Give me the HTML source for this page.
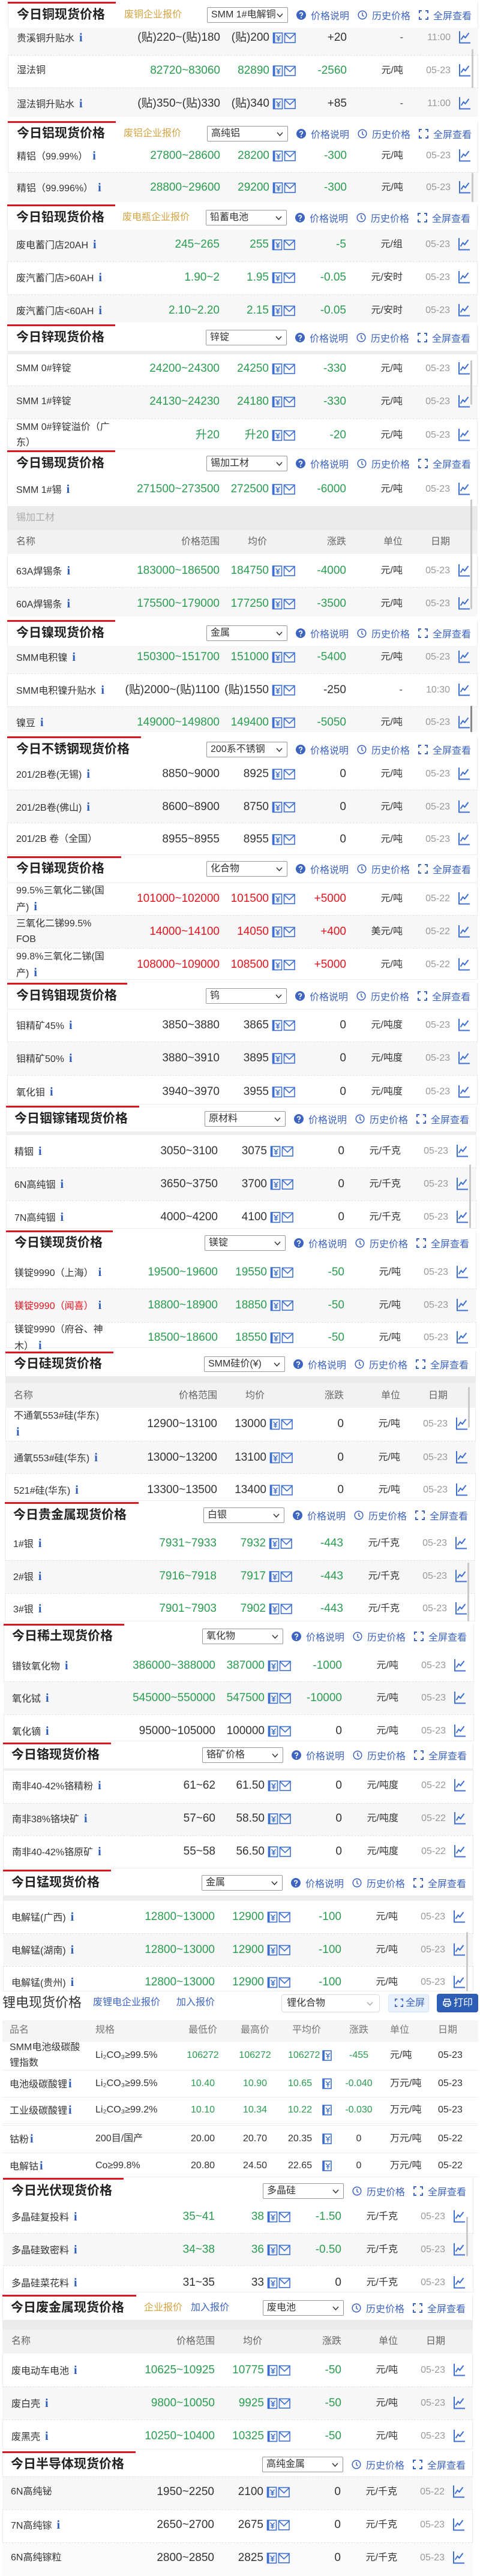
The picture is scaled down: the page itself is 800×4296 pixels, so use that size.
<!DOCTYPE html>
<html><head><meta charset="utf-8">
<style>
*{margin:0;padding:0;box-sizing:border-box}
html,body{width:800px;height:4296px;background:#fff;overflow:hidden}
body{position:relative;font-family:"Liberation Sans","Noto Sans CJK SC",sans-serif;color:#333}
.bar{position:absolute;height:3px;background:#e0141e;z-index:3}
.card{position:absolute;width:784px;border:1px solid #ececec;border-top:none}
.bg{position:absolute;width:784px;background:#f7f7f7}
.sp{position:absolute;width:784px;height:0;border-top:1px dashed #e2e2e2}
.t{position:absolute;height:30px;line-height:30px;font-size:21px;font-weight:bold;color:#222;font-family:"Liberation Sans","Noto Sans CJK SC",sans-serif;white-space:nowrap}
.v{position:absolute;height:24px;line-height:24px;font-size:16px;color:#d4a341;white-space:nowrap}
.lk{position:absolute;height:24px;line-height:24px;font-size:16px;color:#3d64c0;white-space:nowrap}
.sel{position:absolute;width:135px;height:26px;border:1px solid #999;border-radius:2px;font-size:16px;line-height:24px;padding-left:6px;color:#333;white-space:nowrap;overflow:hidden;background:#fff}
.sel svg{position:absolute;right:7px;top:9px;width:11px;height:7px}
.tools{position:absolute;height:24px;display:flex;align-items:center;font-size:16px;color:#3d64c0;white-space:nowrap}
.tools svg{width:16px;height:16px;margin-right:8px;flex:none}
.tools span{margin-right:14px}
.r{position:absolute;width:780px;height:30px}
.r>*{position:absolute;top:0;line-height:30px;white-space:nowrap}
.n{left:15px;font-size:16px;color:#333}
.n2{top:-11px !important;line-height:26px !important}
.p{right:426px;font-size:19px}
.a{right:344px;font-size:19px}
.c{right:215px;font-size:19px}
.u{right:121px;font-size:16px;color:#333}
.d{right:42px;font-size:16px;color:#999}
.ic{left:441px;top:5px !important;width:40px;height:20px}
.cg{left:751px;top:3px !important;width:20px;height:22px}
.G .p,.G .a,.G .c{color:#2a9d50}
.R .p,.R .a,.R .c{color:#e4141c}
.hd>*{font-size:16px !important;color:#666 !important}
.hd .a{right:347px}
i{font-style:normal;font-family:"Liberation Serif",serif;font-weight:bold;color:#2e5cb8;font-size:20px;margin-left:8px}
.sb{position:absolute;width:3px;background:#c9c9c9;border-radius:2px}
.lr{position:absolute;left:4px;width:793px;height:30px}
.lr>*{position:absolute;top:0;line-height:30px;white-space:nowrap;font-size:16px}
.lr .ln{left:12px}.lr .ls{left:155px}
.lr .l1{left:294px;width:80px;text-align:center}
.lr .l2{left:381px;width:80px;text-align:center}
.lr .l3{left:476px}
.lr .ly{left:533px;top:6px !important;width:16px;height:18px}
.lr .l4{left:554px;width:80px;text-align:center}
.lr .l5{left:646px}.lr .l6{left:726px}
.lg .l1,.lg .l2,.lg .l3,.lg .l4{color:#2a9d50}
.ll{position:absolute;left:4px;width:793px;border-top:1px solid #eee}
</style></head><body>
<svg width="0" height="0" style="position:absolute">
<symbol id="ym" viewBox="0 0 40 20">
<rect x="1.5" y="2" width="15" height="16.5" fill="none" stroke="#3d6fd0" stroke-width="1.6"/>
<rect x="1.5" y="2" width="3" height="16.5" fill="#3d6fd0"/>
<polyline points="6.5,6 10,10 13.5,6" fill="none" stroke="#3d6fd0" stroke-width="1.4"/>
<line x1="10" y1="10" x2="10" y2="16" stroke="#3d6fd0" stroke-width="1.4"/>
<line x1="7" y1="11" x2="13" y2="11" stroke="#3d6fd0" stroke-width="1.2"/>
<line x1="7" y1="13.5" x2="13" y2="13.5" stroke="#3d6fd0" stroke-width="1.2"/>
<rect x="20.5" y="2.5" width="17.5" height="15.5" fill="none" stroke="#3d6fd0" stroke-width="1.6"/>
<polyline points="20.5,3 29.2,11.5 38,3" fill="none" stroke="#3d6fd0" stroke-width="1.6"/>
</symbol>
<symbol id="yb" viewBox="0 0 16 18">
<rect x="1" y="1" width="14" height="16" fill="none" stroke="#3d6fd0" stroke-width="1.6"/>
<rect x="1" y="1" width="3" height="16" fill="#3d6fd0"/>
<polyline points="6,5 9.5,9 13,5" fill="none" stroke="#3d6fd0" stroke-width="1.4"/>
<line x1="9.5" y1="9" x2="9.5" y2="15" stroke="#3d6fd0" stroke-width="1.4"/>
<line x1="6.5" y1="10.5" x2="12.5" y2="10.5" stroke="#3d6fd0" stroke-width="1.2"/>
</symbol>
<symbol id="ch" viewBox="0 0 20 22">
<polyline points="2,1 2,20.5 20,20.5" fill="none" stroke="#3d6fd0" stroke-width="2"/>
<polyline points="4.5,15 8.5,9 11.5,12 17.5,4" fill="none" stroke="#3d6fd0" stroke-width="2"/>
</symbol>
<symbol id="q" viewBox="0 0 16 16"><circle cx="8" cy="8" r="8" fill="#3d64c0"/><path d="M5.6,6.2 C5.6,3.6 10.4,3.6 10.4,6.2 C10.4,8 8,8 8,10" fill="none" stroke="#fff" stroke-width="1.8"/><circle cx="8" cy="12.5" r="1.1" fill="#fff"/></symbol>
<symbol id="ck" viewBox="0 0 16 16"><circle cx="8" cy="8" r="6.8" fill="none" stroke="#3d64c0" stroke-width="1.5"/><polyline points="8,4 8,8.5 10.5,10.5" fill="none" stroke="#3d64c0" stroke-width="1.5"/></symbol>
<symbol id="fs" viewBox="0 0 16 16"><path d="M1,5 V1 H5 M11,1 H15 V5 M15,11 V15 H11 M5,15 H1 V11" fill="none" stroke="#3d64c0" stroke-width="2"/></symbol>
<symbol id="dn" viewBox="0 0 11 7"><polyline points="1,1 5.5,6 10,1" fill="none" stroke="#333" stroke-width="1.5"/></symbol>
</svg>

<!-- S1 copper -->
<div class="card" style="top:3px;left:13px;height:192px"></div>
<div class="bg" style="top:46px;left:13px;height:46px"></div>
<div class="bg" style="top:146px;left:13px;height:49px"></div>
<div class="sp" style="top:92px;left:13px"></div><div class="sp" style="top:146px;left:13px"></div>
<div class="bar" style="top:3px;left:13px;width:180px"></div>
<div class="t" style="top:10px;left:28px">今日铜现货价格</div>
<div class="v" style="top:13px;left:207px">废铜企业报价</div>
<div class="sel" style="top:12px;left:345px">SMM 1#电解铜<svg><use href="#dn"/></svg></div>
<div class="tools" style="top:13px;left:494px"><svg><use href="#q"/></svg><span>价格说明</span><svg><use href="#ck"/></svg><span>历史价格</span><svg><use href="#fs"/></svg>全屏查看</div>
<div class="r" style="top:48px;left:13px"><span class="n">贵溪铜升贴水<i>i</i></span><span class="p">(贴)220~(贴)180</span><span class="a">(贴)200</span><svg class="ic"><use href="#ym"/></svg><span class="c">+20</span><span class="u">-</span><span class="d">11:00</span><svg class="cg"><use href="#ch"/></svg></div>
<div class="r G" style="top:103px;left:13px"><span class="n">湿法铜</span><span class="p">82720~83060</span><span class="a">82890</span><svg class="ic"><use href="#ym"/></svg><span class="c">-2560</span><span class="u">元/吨</span><span class="d">05-23</span><svg class="cg"><use href="#ch"/></svg></div>
<div class="r" style="top:158px;left:13px"><span class="n">湿法铜升贴水<i>i</i></span><span class="p">(贴)350~(贴)330</span><span class="a">(贴)340</span><svg class="ic"><use href="#ym"/></svg><span class="c">+85</span><span class="u">-</span><span class="d">11:00</span><svg class="cg"><use href="#ch"/></svg></div>
<div class="sb" style="top:82px;left:786px;height:65px"></div>

<!-- S2 aluminum -->
<div class="card" style="top:202px;left:13px;height:135px"></div>
<div class="bg" style="top:287px;left:13px;height:50px"></div>
<div class="sp" style="top:287px;left:13px"></div>
<div class="bar" style="top:202px;left:13px;width:180px"></div>
<div class="t" style="top:208px;left:28px">今日铝现货价格</div>
<div class="v" style="top:211px;left:206px">废铝企业报价</div>
<div class="sel" style="top:210px;left:345px">高纯铝<svg><use href="#dn"/></svg></div>
<div class="tools" style="top:211px;left:494px"><svg><use href="#q"/></svg><span>价格说明</span><svg><use href="#ck"/></svg><span>历史价格</span><svg><use href="#fs"/></svg>全屏查看</div>
<div class="r G" style="top:245px;left:13px"><span class="n">精铝（99.99%）<i>i</i></span><span class="p">27800~28600</span><span class="a">28200</span><svg class="ic"><use href="#ym"/></svg><span class="c">-300</span><span class="u">元/吨</span><span class="d">05-23</span><svg class="cg"><use href="#ch"/></svg></div>
<div class="r G" style="top:298px;left:13px"><span class="n">精铝（99.996%）<i>i</i></span><span class="p">28800~29600</span><span class="a">29200</span><svg class="ic"><use href="#ym"/></svg><span class="c">-300</span><span class="u">元/吨</span><span class="d">05-23</span><svg class="cg"><use href="#ch"/></svg></div>
<div class="sb" style="top:288px;left:786px;height:49px"></div>

<!-- S3 lead -->
<div class="card" style="top:341px;left:12px;height:197px"></div>
<div class="bg" style="top:383px;left:12px;height:53px"></div>
<div class="bg" style="top:491px;left:12px;height:47px"></div>
<div class="sp" style="top:436px;left:12px"></div><div class="sp" style="top:491px;left:12px"></div>
<div class="bar" style="top:341px;left:12px;width:180px"></div>
<div class="t" style="top:348px;left:27px">今日铅现货价格</div>
<div class="v" style="top:351px;left:204px">废电瓶企业报价</div>
<div class="sel" style="top:350px;left:343px">铅蓄电池<svg><use href="#dn"/></svg></div>
<div class="tools" style="top:351px;left:492px"><svg><use href="#q"/></svg><span>价格说明</span><svg><use href="#ck"/></svg><span>历史价格</span><svg><use href="#fs"/></svg>全屏查看</div>
<div class="r G" style="top:393px;left:12px"><span class="n">废电蓄门店20AH<i>i</i></span><span class="p">245~265</span><span class="a">255</span><svg class="ic"><use href="#ym"/></svg><span class="c">-5</span><span class="u">元/组</span><span class="d">05-23</span><svg class="cg"><use href="#ch"/></svg></div>
<div class="r G" style="top:448px;left:12px"><span class="n">废汽蓄门店&gt;60AH<i>i</i></span><span class="p">1.90~2</span><span class="a">1.95</span><svg class="ic"><use href="#ym"/></svg><span class="c">-0.05</span><span class="u">元/安时</span><span class="d">05-23</span><svg class="cg"><use href="#ch"/></svg></div>
<div class="r G" style="top:503px;left:12px"><span class="n">废汽蓄门店&lt;60AH<i>i</i></span><span class="p">2.10~2.20</span><span class="a">2.15</span><svg class="ic"><use href="#ym"/></svg><span class="c">-0.05</span><span class="u">元/安时</span><span class="d">05-23</span><svg class="cg"><use href="#ch"/></svg></div>

<!-- S4 zinc -->
<div class="card" style="top:541px;left:12px;height:208px"></div>
<div class="bg" style="top:585px;left:12px;height:6px;background:#eee"></div>
<div class="bg" style="top:643px;left:12px;height:55px"></div>
<div class="sp" style="top:643px;left:12px"></div><div class="sp" style="top:698px;left:12px"></div>
<div class="bar" style="top:541px;left:12px;width:180px"></div>
<div class="t" style="top:548px;left:27px">今日锌现货价格</div>
<div class="sel" style="top:550px;left:343px">锌锭<svg><use href="#dn"/></svg></div>
<div class="tools" style="top:551px;left:492px"><svg><use href="#q"/></svg><span>价格说明</span><svg><use href="#ck"/></svg><span>历史价格</span><svg><use href="#fs"/></svg>全屏查看</div>
<div class="r G" style="top:600px;left:12px"><span class="n">SMM 0#锌锭</span><span class="p">24200~24300</span><span class="a">24250</span><svg class="ic"><use href="#ym"/></svg><span class="c">-330</span><span class="u">元/吨</span><span class="d">05-23</span><svg class="cg"><use href="#ch"/></svg></div>
<div class="r G" style="top:655px;left:12px"><span class="n">SMM 1#锌锭</span><span class="p">24130~24230</span><span class="a">24180</span><svg class="ic"><use href="#ym"/></svg><span class="c">-330</span><span class="u">元/吨</span><span class="d">05-23</span><svg class="cg"><use href="#ch"/></svg></div>
<div class="r G" style="top:711px;left:12px"><span class="n n2">SMM 0#锌锭溢价（广<br>东）</span><span class="p">升20</span><span class="a">升20</span><svg class="ic"><use href="#ym"/></svg><span class="c">-20</span><span class="u">元/吨</span><span class="d">05-23</span><svg class="cg"><use href="#ch"/></svg></div>
<div class="sb" style="top:601px;left:784px;height:74px"></div>

<!-- S5 tin -->
<div class="card" style="top:751px;left:12px;height:277px"></div>
<div class="bg" style="top:844px;left:12px;height:40px;background:#ebebeb"></div>
<div class="bg" style="top:884px;left:12px;height:40px;background:#f2f2f2"></div>
<div class="bg" style="top:979px;left:12px;height:49px"></div>
<div class="sp" style="top:979px;left:12px"></div>
<div class="bar" style="top:751px;left:12px;width:180px"></div>
<div class="t" style="top:758px;left:27px">今日锡现货价格</div>
<div class="sel" style="top:760px;left:344px">锡加工材<svg><use href="#dn"/></svg></div>
<div class="tools" style="top:761px;left:493px"><svg><use href="#q"/></svg><span>价格说明</span><svg><use href="#ck"/></svg><span>历史价格</span><svg><use href="#fs"/></svg>全屏查看</div>
<div class="r G" style="top:801px;left:12px"><span class="n">SMM 1#锡<i>i</i></span><span class="p">271500~273500</span><span class="a">272500</span><svg class="ic"><use href="#ym"/></svg><span class="c">-6000</span><span class="u">元/吨</span><span class="d">05-23</span><svg class="cg"><use href="#ch"/></svg></div>
<div class="lk" style="top:852px;left:27px;color:#aaa">锡加工材</div>
<div class="r hd" style="top:889px;left:12px"><span class="n">名称</span><span class="p">价格范围</span><span class="a">均价</span><span class="c">涨跌</span><span class="u">单位</span><span class="d">日期</span></div>
<div class="r G" style="top:937px;left:12px"><span class="n">63A焊锡条<i>i</i></span><span class="p">183000~186500</span><span class="a">184750</span><svg class="ic"><use href="#ym"/></svg><span class="c">-4000</span><span class="u">元/吨</span><span class="d">05-23</span><svg class="cg"><use href="#ch"/></svg></div>
<div class="r G" style="top:992px;left:12px"><span class="n">60A焊锡条<i>i</i></span><span class="p">175500~179000</span><span class="a">177250</span><svg class="ic"><use href="#ym"/></svg><span class="c">-3500</span><span class="u">元/吨</span><span class="d">05-23</span><svg class="cg"><use href="#ch"/></svg></div>
<div class="sb" style="top:833px;left:784px;height:183px"></div>

<!-- S6 nickel -->
<div class="card" style="top:1034px;left:12px;height:187px"></div>
<div class="bg" style="top:1077px;left:12px;height:46px"></div>
<div class="bg" style="top:1178px;left:12px;height:43px"></div>
<div class="sp" style="top:1123px;left:12px"></div><div class="sp" style="top:1178px;left:12px"></div>
<div class="bar" style="top:1034px;left:12px;width:180px"></div>
<div class="t" style="top:1041px;left:27px">今日镍现货价格</div>
<div class="sel" style="top:1043px;left:344px">金属<svg><use href="#dn"/></svg></div>
<div class="tools" style="top:1044px;left:493px"><svg><use href="#q"/></svg><span>价格说明</span><svg><use href="#ck"/></svg><span>历史价格</span><svg><use href="#fs"/></svg>全屏查看</div>
<div class="r G" style="top:1081px;left:12px"><span class="n">SMM电积镍<i>i</i></span><span class="p">150300~151700</span><span class="a">151000</span><svg class="ic"><use href="#ym"/></svg><span class="c">-5400</span><span class="u">元/吨</span><span class="d">05-23</span><svg class="cg"><use href="#ch"/></svg></div>
<div class="r" style="top:1136px;left:12px"><span class="n">SMM电积镍升贴水<i>i</i></span><span class="p">(贴)2000~(贴)1100</span><span class="a">(贴)1550</span><svg class="ic"><use href="#ym"/></svg><span class="c">-250</span><span class="u">-</span><span class="d">10:30</span><svg class="cg"><use href="#ch"/></svg></div>
<div class="r G" style="top:1190px;left:12px"><span class="n">镍豆<i>i</i></span><span class="p">149000~149800</span><span class="a">149400</span><svg class="ic"><use href="#ym"/></svg><span class="c">-5050</span><span class="u">元/吨</span><span class="d">05-23</span><svg class="cg"><use href="#ch"/></svg></div>
<div class="sb" style="top:1177px;left:784px;height:44px;background:#888"></div>

<!-- S7 stainless -->
<div class="card" style="top:1228px;left:12px;height:198px"></div>
<div class="bg" style="top:1317px;left:12px;height:55px"></div>
<div class="sp" style="top:1317px;left:12px"></div><div class="sp" style="top:1372px;left:12px"></div>
<div class="bar" style="top:1228px;left:12px;width:223px"></div>
<div class="t" style="top:1235px;left:27px">今日不锈钢现货价格</div>
<div class="sel" style="top:1237px;left:344px">200系不锈钢<svg><use href="#dn"/></svg></div>
<div class="tools" style="top:1238px;left:493px"><svg><use href="#q"/></svg><span>价格说明</span><svg><use href="#ck"/></svg><span>历史价格</span><svg><use href="#fs"/></svg>全屏查看</div>
<div class="r" style="top:1276px;left:12px"><span class="n">201/2B卷(无锡)<i>i</i></span><span class="p">8850~9000</span><span class="a">8925</span><svg class="ic"><use href="#ym"/></svg><span class="c">0</span><span class="u">元/吨</span><span class="d">05-23</span><svg class="cg"><use href="#ch"/></svg></div>
<div class="r" style="top:1331px;left:12px"><span class="n">201/2B卷(佛山)<i>i</i></span><span class="p">8600~8900</span><span class="a">8750</span><svg class="ic"><use href="#ym"/></svg><span class="c">0</span><span class="u">元/吨</span><span class="d">05-23</span><svg class="cg"><use href="#ch"/></svg></div>
<div class="r" style="top:1385px;left:12px"><span class="n">201/2B 卷（全国）</span><span class="p">8955~8955</span><span class="a">8955</span><svg class="ic"><use href="#ym"/></svg><span class="c">0</span><span class="u">元/吨</span><span class="d">05-23</span><svg class="cg"><use href="#ch"/></svg></div>

<!-- S8 antimony -->
<div class="card" style="top:1428px;left:12px;height:206px"></div>
<div class="sp" style="top:1471px;left:12px;border-top:2px solid #f2f2f2"></div>
<div class="bg" style="top:1526px;left:12px;height:55px"></div>
<div class="sp" style="top:1526px;left:12px"></div><div class="sp" style="top:1581px;left:12px"></div>
<div class="bar" style="top:1428px;left:12px;width:190px"></div>
<div class="t" style="top:1434px;left:27px">今日锑现货价格</div>
<div class="sel" style="top:1436px;left:344px">化合物<svg><use href="#dn"/></svg></div>
<div class="tools" style="top:1437px;left:493px"><svg><use href="#q"/></svg><span>价格说明</span><svg><use href="#ck"/></svg><span>历史价格</span><svg><use href="#fs"/></svg>全屏查看</div>
<div class="r R" style="top:1484px;left:12px"><span class="n n2">99.5%三氧化二锑(国<br>产)<i>i</i></span><span class="p">101000~102000</span><span class="a">101500</span><svg class="ic"><use href="#ym"/></svg><span class="c">+5000</span><span class="u">元/吨</span><span class="d">05-22</span><svg class="cg"><use href="#ch"/></svg></div>
<div class="r R" style="top:1539px;left:12px"><span class="n n2">三氧化二锑99.5%<br>FOB</span><span class="p">14000~14100</span><span class="a">14050</span><svg class="ic"><use href="#ym"/></svg><span class="c">+400</span><span class="u">美元/吨</span><span class="d">05-22</span><svg class="cg"><use href="#ch"/></svg></div>
<div class="r R" style="top:1594px;left:12px"><span class="n n2">99.8%三氧化二锑(国<br>产)<i>i</i></span><span class="p">108000~109000</span><span class="a">108500</span><svg class="ic"><use href="#ym"/></svg><span class="c">+5000</span><span class="u">元/吨</span><span class="d">05-22</span><svg class="cg"><use href="#ch"/></svg></div>

<!-- S9 W Mo -->
<div class="card" style="top:1639px;left:12px;height:203px"></div>
<div class="sp" style="top:1682px;left:12px;border-top:2px solid #f2f2f2"></div>
<div class="bg" style="top:1737px;left:12px;height:56px"></div>
<div class="sp" style="top:1737px;left:12px"></div><div class="sp" style="top:1793px;left:12px"></div>
<div class="bar" style="top:1639px;left:12px;width:200px"></div>
<div class="t" style="top:1646px;left:27px">今日钨钼现货价格</div>
<div class="sel" style="top:1648px;left:343px">钨<svg><use href="#dn"/></svg></div>
<div class="tools" style="top:1649px;left:492px"><svg><use href="#q"/></svg><span>价格说明</span><svg><use href="#ck"/></svg><span>历史价格</span><svg><use href="#fs"/></svg>全屏查看</div>
<div class="r" style="top:1695px;left:12px"><span class="n">钼精矿45%<i>i</i></span><span class="p">3850~3880</span><span class="a">3865</span><svg class="ic"><use href="#ym"/></svg><span class="c">0</span><span class="u">元/吨度</span><span class="d">05-23</span><svg class="cg"><use href="#ch"/></svg></div>
<div class="r" style="top:1750px;left:12px"><span class="n">钼精矿50%<i>i</i></span><span class="p">3880~3910</span><span class="a">3895</span><svg class="ic"><use href="#ym"/></svg><span class="c">0</span><span class="u">元/吨度</span><span class="d">05-23</span><svg class="cg"><use href="#ch"/></svg></div>
<div class="r" style="top:1806px;left:12px"><span class="n">氧化钼<i>i</i></span><span class="p">3940~3970</span><span class="a">3955</span><svg class="ic"><use href="#ym"/></svg><span class="c">0</span><span class="u">元/吨度</span><span class="d">05-23</span><svg class="cg"><use href="#ch"/></svg></div>

<!-- S10 In Ga Ge -->
<div class="card" style="top:1844px;left:10px;height:205px"></div>
<div class="bg" style="top:1887px;left:10px;height:6px;background:#eee"></div>
<div class="bg" style="top:1947px;left:10px;height:55px"></div>
<div class="sp" style="top:1947px;left:10px"></div><div class="sp" style="top:2002px;left:10px"></div>
<div class="bar" style="top:1844px;left:10px;width:222px"></div>
<div class="t" style="top:1851px;left:24px">今日铟镓锗现货价格</div>
<div class="sel" style="top:1853px;left:341px">原材料<svg><use href="#dn"/></svg></div>
<div class="tools" style="top:1854px;left:490px"><svg><use href="#q"/></svg><span>价格说明</span><svg><use href="#ck"/></svg><span>历史价格</span><svg><use href="#fs"/></svg>全屏查看</div>
<div class="r" style="top:1905px;left:9px"><span class="n">精铟<i>i</i></span><span class="p">3050~3100</span><span class="a">3075</span><svg class="ic"><use href="#ym"/></svg><span class="c">0</span><span class="u">元/千克</span><span class="d">05-23</span><svg class="cg"><use href="#ch"/></svg></div>
<div class="r" style="top:1960px;left:9px"><span class="n">6N高纯铟<i>i</i></span><span class="p">3650~3750</span><span class="a">3700</span><svg class="ic"><use href="#ym"/></svg><span class="c">0</span><span class="u">元/千克</span><span class="d">05-23</span><svg class="cg"><use href="#ch"/></svg></div>
<div class="r" style="top:2015px;left:9px"><span class="n">7N高纯铟<i>i</i></span><span class="p">4000~4200</span><span class="a">4100</span><svg class="ic"><use href="#ym"/></svg><span class="c">0</span><span class="u">元/千克</span><span class="d">05-23</span><svg class="cg"><use href="#ch"/></svg></div>
<div class="sb" style="top:1942px;left:782px;height:106px"></div>

<!-- S11 Mg -->
<div class="card" style="top:2052px;left:10px;height:196px"></div>
<div class="bg" style="top:2149px;left:10px;height:56px"></div>
<div class="sp" style="top:2149px;left:10px"></div><div class="sp" style="top:2205px;left:10px"></div>
<div class="bar" style="top:2052px;left:10px;width:178px"></div>
<div class="t" style="top:2058px;left:24px">今日镁现货价格</div>
<div class="sel" style="top:2060px;left:341px">镁锭<svg><use href="#dn"/></svg></div>
<div class="tools" style="top:2061px;left:490px"><svg><use href="#q"/></svg><span>价格说明</span><svg><use href="#ck"/></svg><span>历史价格</span><svg><use href="#fs"/></svg>全屏查看</div>
<div class="r G" style="top:2107px;left:9px"><span class="n">镁锭9990（上海）<i>i</i></span><span class="p">19500~19600</span><span class="a">19550</span><svg class="ic"><use href="#ym"/></svg><span class="c">-50</span><span class="u">元/吨</span><span class="d">05-23</span><svg class="cg"><use href="#ch"/></svg></div>
<div class="r G" style="top:2162px;left:9px"><span class="n" style="color:#e4141c">镁锭9990（闻喜）<i>i</i></span><span class="p">18800~18900</span><span class="a">18850</span><svg class="ic"><use href="#ym"/></svg><span class="c">-50</span><span class="u">元/吨</span><span class="d">05-23</span><svg class="cg"><use href="#ch"/></svg></div>
<div class="r G" style="top:2216px;left:9px"><span class="n n2">镁锭9990（府谷、神<br>木）<i>i</i></span><span class="p">18500~18600</span><span class="a">18550</span><svg class="ic"><use href="#ym"/></svg><span class="c">-50</span><span class="u">元/吨</span><span class="d">05-23</span><svg class="cg"><use href="#ch"/></svg></div>

<!-- S12 Si -->
<div class="card" style="top:2254px;left:9px;height:249px"></div>
<div class="bg" style="top:2295px;left:9px;height:12px;background:#ebebeb"></div>
<div class="bg" style="top:2307px;left:9px;height:41px;background:#f2f2f2"></div>
<div class="bg" style="top:2403px;left:9px;height:54px"></div>
<div class="sp" style="top:2403px;left:9px"></div><div class="sp" style="top:2457px;left:9px"></div>
<div class="bar" style="top:2254px;left:9px;width:180px"></div>
<div class="t" style="top:2260px;left:23px">今日硅现货价格</div>
<div class="sel" style="top:2262px;left:340px">SMM硅价(¥)<svg><use href="#dn"/></svg></div>
<div class="tools" style="top:2263px;left:489px"><svg><use href="#q"/></svg><span>价格说明</span><svg><use href="#ck"/></svg><span>历史价格</span><svg><use href="#fs"/></svg>全屏查看</div>
<div class="r hd" style="top:2313px;left:8px"><span class="n">名称</span><span class="p">价格范围</span><span class="a">均价</span><span class="c">涨跌</span><span class="u">单位</span><span class="d">日期</span></div>
<div class="r" style="top:2360px;left:8px"><span class="n n2">不通氧553#硅(华东)<br><i style="margin-left:4px">i</i></span><span class="p">12900~13100</span><span class="a">13000</span><svg class="ic"><use href="#ym"/></svg><span class="c">0</span><span class="u">元/吨</span><span class="d">05-23</span><svg class="cg"><use href="#ch"/></svg></div>
<div class="r" style="top:2416px;left:8px"><span class="n">通氧553#硅(华东)<i>i</i></span><span class="p">13000~13200</span><span class="a">13100</span><svg class="ic"><use href="#ym"/></svg><span class="c">0</span><span class="u">元/吨</span><span class="d">05-23</span><svg class="cg"><use href="#ch"/></svg></div>
<div class="r" style="top:2470px;left:8px"><span class="n">521#硅(华东)<i>i</i></span><span class="p">13300~13500</span><span class="a">13400</span><svg class="ic"><use href="#ym"/></svg><span class="c">0</span><span class="u">元/吨</span><span class="d">05-23</span><svg class="cg"><use href="#ch"/></svg></div>
<div class="sb" style="top:2313px;left:780px;height:68px"></div>

<!-- S13 precious -->
<div class="card" style="top:2505px;left:8px;height:199px"></div>
<div class="bg" style="top:2602px;left:8px;height:55px"></div>
<div class="sp" style="top:2602px;left:8px"></div><div class="sp" style="top:2657px;left:8px"></div>
<div class="bar" style="top:2505px;left:8px;width:223px"></div>
<div class="t" style="top:2512px;left:22px">今日贵金属现货价格</div>
<div class="sel" style="top:2514px;left:339px">白银<svg><use href="#dn"/></svg></div>
<div class="tools" style="top:2515px;left:488px"><svg><use href="#q"/></svg><span>价格说明</span><svg><use href="#ck"/></svg><span>历史价格</span><svg><use href="#fs"/></svg>全屏查看</div>
<div class="r G" style="top:2559px;left:7px"><span class="n">1#银<i>i</i></span><span class="p">7931~7933</span><span class="a">7932</span><svg class="ic"><use href="#ym"/></svg><span class="c">-443</span><span class="u">元/千克</span><span class="d">05-23</span><svg class="cg"><use href="#ch"/></svg></div>
<div class="r G" style="top:2614px;left:7px"><span class="n">2#银<i>i</i></span><span class="p">7916~7918</span><span class="a">7917</span><svg class="ic"><use href="#ym"/></svg><span class="c">-443</span><span class="u">元/千克</span><span class="d">05-23</span><svg class="cg"><use href="#ch"/></svg></div>
<div class="r G" style="top:2668px;left:7px"><span class="n">3#银<i>i</i></span><span class="p">7901~7903</span><span class="a">7902</span><svg class="ic"><use href="#ym"/></svg><span class="c">-443</span><span class="u">元/千克</span><span class="d">05-23</span><svg class="cg"><use href="#ch"/></svg></div>
<div class="sb" style="top:2606px;left:779px;height:98px"></div>

<!-- S14 rare earth -->
<div class="card" style="top:2708px;left:6px;height:196px"></div>
<div class="bg" style="top:2804px;left:6px;height:55px"></div>
<div class="sp" style="top:2804px;left:6px"></div><div class="sp" style="top:2859px;left:6px"></div>
<div class="bar" style="top:2708px;left:6px;width:201px"></div>
<div class="t" style="top:2714px;left:20px">今日稀土现货价格</div>
<div class="sel" style="top:2716px;left:337px">氧化物<svg><use href="#dn"/></svg></div>
<div class="tools" style="top:2717px;left:486px"><svg><use href="#q"/></svg><span>价格说明</span><svg><use href="#ck"/></svg><span>历史价格</span><svg><use href="#fs"/></svg>全屏查看</div>
<div class="r G" style="top:2763px;left:5px"><span class="n">镨钕氧化物<i>i</i></span><span class="p">386000~388000</span><span class="a">387000</span><svg class="ic"><use href="#ym"/></svg><span class="c">-1000</span><span class="u">元/吨</span><span class="d">05-23</span><svg class="cg"><use href="#ch"/></svg></div>
<div class="r G" style="top:2817px;left:5px"><span class="n">氧化铽<i>i</i></span><span class="p">545000~550000</span><span class="a">547500</span><svg class="ic"><use href="#ym"/></svg><span class="c">-10000</span><span class="u">元/吨</span><span class="d">05-23</span><svg class="cg"><use href="#ch"/></svg></div>
<div class="r" style="top:2872px;left:5px"><span class="n">氧化镝<i>i</i></span><span class="p">95000~105000</span><span class="a">100000</span><svg class="ic"><use href="#ym"/></svg><span class="c">0</span><span class="u">元/吨</span><span class="d">05-23</span><svg class="cg"><use href="#ch"/></svg></div>

<!-- S15 chrome -->
<div class="card" style="top:2906px;left:5px;height:210px"></div>
<div class="bg" style="top:2949px;left:5px;height:4px;background:#eee"></div>
<div class="bg" style="top:3007px;left:5px;height:54px"></div>
<div class="sp" style="top:3007px;left:5px"></div><div class="sp" style="top:3061px;left:5px"></div>
<div class="bar" style="top:2906px;left:5px;width:180px"></div>
<div class="t" style="top:2912px;left:19px">今日铬现货价格</div>
<div class="sel" style="top:2914px;left:337px">铬矿价格<svg><use href="#dn"/></svg></div>
<div class="tools" style="top:2915px;left:486px"><svg><use href="#q"/></svg><span>价格说明</span><svg><use href="#ck"/></svg><span>历史价格</span><svg><use href="#fs"/></svg>全屏查看</div>
<div class="r" style="top:2963px;left:5px"><span class="n">南非40-42%铬精粉<i>i</i></span><span class="p">61~62</span><span class="a">61.50</span><svg class="ic"><use href="#ym"/></svg><span class="c">0</span><span class="u">元/吨度</span><span class="d">05-22</span><svg class="cg"><use href="#ch"/></svg></div>
<div class="r" style="top:3018px;left:5px"><span class="n">南非38%铬块矿<i>i</i></span><span class="p">57~60</span><span class="a">58.50</span><svg class="ic"><use href="#ym"/></svg><span class="c">0</span><span class="u">元/吨度</span><span class="d">05-22</span><svg class="cg"><use href="#ch"/></svg></div>
<div class="r" style="top:3073px;left:5px"><span class="n">南非40-42%铬原矿<i>i</i></span><span class="p">55~58</span><span class="a">56.50</span><svg class="ic"><use href="#ym"/></svg><span class="c">0</span><span class="u">元/吨度</span><span class="d">05-22</span><svg class="cg"><use href="#ch"/></svg></div>

<!-- S16 Mn -->
<div class="card" style="top:3118px;left:5px;height:203px"></div>
<div class="bg" style="top:3161px;left:5px;height:9px;background:#eee"></div>
<div class="bg" style="top:3224px;left:5px;height:55px"></div>
<div class="sp" style="top:3224px;left:5px"></div><div class="sp" style="top:3279px;left:5px"></div>
<div class="bar" style="top:3118px;left:5px;width:180px"></div>
<div class="t" style="top:3125px;left:19px">今日锰现货价格</div>
<div class="sel" style="top:3127px;left:336px">金属<svg><use href="#dn"/></svg></div>
<div class="tools" style="top:3128px;left:485px"><svg><use href="#q"/></svg><span>价格说明</span><svg><use href="#ck"/></svg><span>历史价格</span><svg><use href="#fs"/></svg>全屏查看</div>
<div class="r G" style="top:3182px;left:4px"><span class="n">电解锰(广西)<i>i</i></span><span class="p">12800~13000</span><span class="a">12900</span><svg class="ic"><use href="#ym"/></svg><span class="c">-100</span><span class="u">元/吨</span><span class="d">05-23</span><svg class="cg"><use href="#ch"/></svg></div>
<div class="r G" style="top:3237px;left:4px"><span class="n">电解锰(湖南)<i>i</i></span><span class="p">12800~13000</span><span class="a">12900</span><svg class="ic"><use href="#ym"/></svg><span class="c">-100</span><span class="u">元/吨</span><span class="d">05-23</span><svg class="cg"><use href="#ch"/></svg></div>
<div class="r G" style="top:3291px;left:4px"><span class="n">电解锰(贵州)<i>i</i></span><span class="p">12800~13000</span><span class="a">12900</span><svg class="ic"><use href="#ym"/></svg><span class="c">-100</span><span class="u">元/吨</span><span class="d">05-23</span><svg class="cg"><use href="#ch"/></svg></div>
<div class="sb" style="top:3222px;left:777px;height:99px"></div>

<!-- S17 lithium -->
<div style="position:absolute;top:3323px;left:4px;font-size:22px;line-height:34px;color:#333">锂电现货价格</div>
<div class="lk" style="top:3328px;left:155px">废锂电企业报价</div>
<div class="lk" style="top:3328px;left:294px">加入报价</div>
<div style="position:absolute;top:3326px;left:469px;width:164px;height:30px;border:1px solid #ddd;border-radius:4px;font-size:16px;line-height:28px;padding-left:8px;color:#333">锂化合物<svg style="position:absolute;right:10px;top:11px;width:11px;height:7px;opacity:.4"><use href="#dn"/></svg></div>
<div style="position:absolute;top:3326px;left:647px;width:68px;height:30px;background:#e9f1fd;border:1px solid #d6e4f8;border-radius:3px;font-size:16px;line-height:28px;color:#3d64c0;padding-left:10px"><svg style="width:14px;height:14px;vertical-align:-2px;margin-right:4px"><use href="#fs"/></svg>全屏</div>
<div style="position:absolute;top:3325px;left:728px;width:69px;height:31px;background:#2d5db5;border-radius:4px;font-size:16px;line-height:31px;color:#fff;padding-left:10px;white-space:nowrap"><svg viewBox="0 0 14 14" style="width:14px;height:14px;vertical-align:-2px;margin-right:4px"><rect x="3" y="1" width="8" height="4" fill="none" stroke="#fff" stroke-width="1.5"/><rect x="1" y="5" width="12" height="6" rx="1" fill="none" stroke="#fff" stroke-width="1.5"/><rect x="4" y="9" width="6" height="4" fill="#2d5db5" stroke="#fff" stroke-width="1.5"/></svg>打印</div>
<div style="position:absolute;top:3369px;left:4px;width:793px;height:36px;background:#f5f5f5"></div>
<div class="lr" style="top:3371px;color:#777"><span class="ln" style="color:#777">品名</span><span class="ls" style="color:#777">规格</span><span class="l1" style="color:#777">最低价</span><span class="l2" style="color:#777">最高价</span><span class="l3" style="left:483px;color:#777">平均价</span><span class="l4" style="color:#777">涨跌</span><span class="l5" style="color:#777">单位</span><span class="l6" style="color:#777">日期</span></div>
<div class="ll" style="top:3452px"></div><div class="ll" style="top:3497px"></div><div class="ll" style="top:3541px"></div><div class="ll" style="top:3544px"></div><div class="ll" style="top:3590px"></div><div class="ll" style="top:3630px"></div>
<div class="lr lg" style="top:3413px"><span class="ln" style="top:-11px;line-height:26px">SMM电池级碳酸<br>锂指数</span><span class="ls">Li₂CO₃≥99.5%</span><span class="l1">106272</span><span class="l2">106272</span><span class="l3">106272</span><svg class="ly"><use href="#yb"/></svg><span class="l4">-455</span><span class="l5">元/吨</span><span class="l6">05-23</span></div>
<div class="lr lg" style="top:3460px"><span class="ln">电池级碳酸锂<i style="margin-left:2px">i</i></span><span class="ls">Li₂CO₃≥99.5%</span><span class="l1">10.40</span><span class="l2">10.90</span><span class="l3">10.65</span><svg class="ly"><use href="#yb"/></svg><span class="l4">-0.040</span><span class="l5">万元/吨</span><span class="l6">05-23</span></div>
<div class="lr lg" style="top:3504px"><span class="ln">工业级碳酸锂<i style="margin-left:2px">i</i></span><span class="ls">Li₂CO₃≥99.2%</span><span class="l1">10.10</span><span class="l2">10.34</span><span class="l3">10.22</span><svg class="ly"><use href="#yb"/></svg><span class="l4">-0.030</span><span class="l5">万元/吨</span><span class="l6">05-23</span></div>
<div class="lr" style="top:3552px"><span class="ln">钴粉<i style="margin-left:2px">i</i></span><span class="ls">200目/国产</span><span class="l1">20.00</span><span class="l2">20.70</span><span class="l3">20.35</span><svg class="ly"><use href="#yb"/></svg><span class="l4">0</span><span class="l5">万元/吨</span><span class="l6">05-22</span></div>
<div class="lr" style="top:3597px"><span class="ln">电解钴<i style="margin-left:2px">i</i></span><span class="ls">Co≥99.8%</span><span class="l1">20.80</span><span class="l2">24.50</span><span class="l3">22.65</span><svg class="ly"><use href="#yb"/></svg><span class="l4">0</span><span class="l5">万元/吨</span><span class="l6">05-22</span></div>

<!-- S18 PV -->
<div class="card" style="top:3632px;left:5px;height:191px"></div>
<div class="bg" style="top:3724px;left:5px;height:54px"></div>
<div class="sp" style="top:3724px;left:5px"></div><div class="sp" style="top:3778px;left:5px"></div>
<div class="bar" style="top:3632px;left:5px;width:201px"></div>
<div class="t" style="top:3639px;left:19px">今日光伏现货价格</div>
<div class="sel" style="top:3641px;left:438px">多晶硅<svg><use href="#dn"/></svg></div>
<div class="tools" style="top:3642px;left:587px"><svg><use href="#ck"/></svg><span>历史价格</span><svg><use href="#fs"/></svg>全屏查看</div>
<div class="r G" style="top:3682px;left:4px"><span class="n">多晶硅复投料<i>i</i></span><span class="p">35~41</span><span class="a">38</span><svg class="ic"><use href="#ym"/></svg><span class="c">-1.50</span><span class="u">元/千克</span><span class="d">05-23</span><svg class="cg"><use href="#ch"/></svg></div>
<div class="r G" style="top:3737px;left:4px"><span class="n">多晶硅致密料<i>i</i></span><span class="p">34~38</span><span class="a">36</span><svg class="ic"><use href="#ym"/></svg><span class="c">-0.50</span><span class="u">元/千克</span><span class="d">05-23</span><svg class="cg"><use href="#ch"/></svg></div>
<div class="r" style="top:3792px;left:4px"><span class="n">多晶硅菜花料<i>i</i></span><span class="p">31~35</span><span class="a">33</span><svg class="ic"><use href="#ym"/></svg><span class="c">0</span><span class="u">元/千克</span><span class="d">05-23</span><svg class="cg"><use href="#ch"/></svg></div>
<div class="sb" style="top:3697px;left:777px;height:66px"></div>

<!-- S19 waste -->
<div class="card" style="top:3827px;left:4px;height:258px"></div>
<div class="bg" style="top:3869px;left:4px;height:16px;background:#ebebeb"></div>
<div class="bg" style="top:3885px;left:4px;height:40px;background:#f2f2f2"></div>
<div class="bg" style="top:3980px;left:4px;height:55px"></div>
<div class="sp" style="top:3980px;left:4px"></div><div class="sp" style="top:4035px;left:4px"></div>
<div class="bar" style="top:3827px;left:4px;width:223px"></div>
<div class="t" style="top:3834px;left:18px">今日废金属现货价格</div>
<div class="v" style="top:3837px;left:240px">企业报价</div>
<div class="lk" style="top:3837px;left:318px">加入报价</div>
<div class="sel" style="top:3836px;left:438px">废电池<svg><use href="#dn"/></svg></div>
<div class="tools" style="top:3837px;left:586px"><svg><use href="#ck"/></svg><span>历史价格</span><svg><use href="#fs"/></svg>全屏查看</div>
<div class="r hd" style="top:3890px;left:4px"><span class="n">名称</span><span class="p">价格范围</span><span class="a">均价</span><span class="c">涨跌</span><span class="u">单位</span><span class="d">日期</span></div>
<div class="r G" style="top:3938px;left:4px"><span class="n">废电动车电池<i>i</i></span><span class="p">10625~10925</span><span class="a">10775</span><svg class="ic"><use href="#ym"/></svg><span class="c">-50</span><span class="u">元/吨</span><span class="d">05-23</span><svg class="cg"><use href="#ch"/></svg></div>
<div class="r G" style="top:3993px;left:4px"><span class="n">废白壳<i>i</i></span><span class="p">9800~10050</span><span class="a">9925</span><svg class="ic"><use href="#ym"/></svg><span class="c">-50</span><span class="u">元/吨</span><span class="d">05-23</span><svg class="cg"><use href="#ch"/></svg></div>
<div class="r G" style="top:4048px;left:4px"><span class="n">废黑壳<i>i</i></span><span class="p">10250~10400</span><span class="a">10325</span><svg class="ic"><use href="#ym"/></svg><span class="c">-50</span><span class="u">元/吨</span><span class="d">05-23</span><svg class="cg"><use href="#ch"/></svg></div>

<!-- S20 semiconductor -->
<div class="card" style="top:4088px;left:4px;height:208px"></div>
<div class="bg" style="top:4130px;left:4px;height:55px"></div>
<div class="bg" style="top:4240px;left:4px;height:56px;background:#fafafa"></div>
<div class="sp" style="top:4130px;left:4px"></div><div class="sp" style="top:4185px;left:4px"></div><div class="sp" style="top:4240px;left:4px"></div>
<div class="bar" style="top:4088px;left:4px;width:222px"></div>
<div class="t" style="top:4095px;left:18px">今日半导体现货价格</div>
<div class="sel" style="top:4097px;left:437px">高纯金属<svg><use href="#dn"/></svg></div>
<div class="tools" style="top:4098px;left:586px"><svg><use href="#ck"/></svg><span>历史价格</span><svg><use href="#fs"/></svg>全屏查看</div>
<div class="r" style="top:4141px;left:3px"><span class="n">6N高纯铋</span><span class="p">1950~2250</span><span class="a">2100</span><svg class="ic"><use href="#ym"/></svg><span class="c">0</span><span class="u">元/千克</span><span class="d">05-22</span><svg class="cg"><use href="#ch"/></svg></div>
<div class="r" style="top:4196px;left:3px"><span class="n">7N高纯镓<i>i</i></span><span class="p">2650~2700</span><span class="a">2675</span><svg class="ic"><use href="#ym"/></svg><span class="c">0</span><span class="u">元/千克</span><span class="d">05-23</span><svg class="cg"><use href="#ch"/></svg></div>
<div class="r" style="top:4251px;left:3px"><span class="n">6N高纯镓粒</span><span class="p">2800~2850</span><span class="a">2825</span><svg class="ic"><use href="#ym"/></svg><span class="c">0</span><span class="u">元/千克</span><span class="d">05-23</span><svg class="cg"><use href="#ch"/></svg></div>
</body></html>
